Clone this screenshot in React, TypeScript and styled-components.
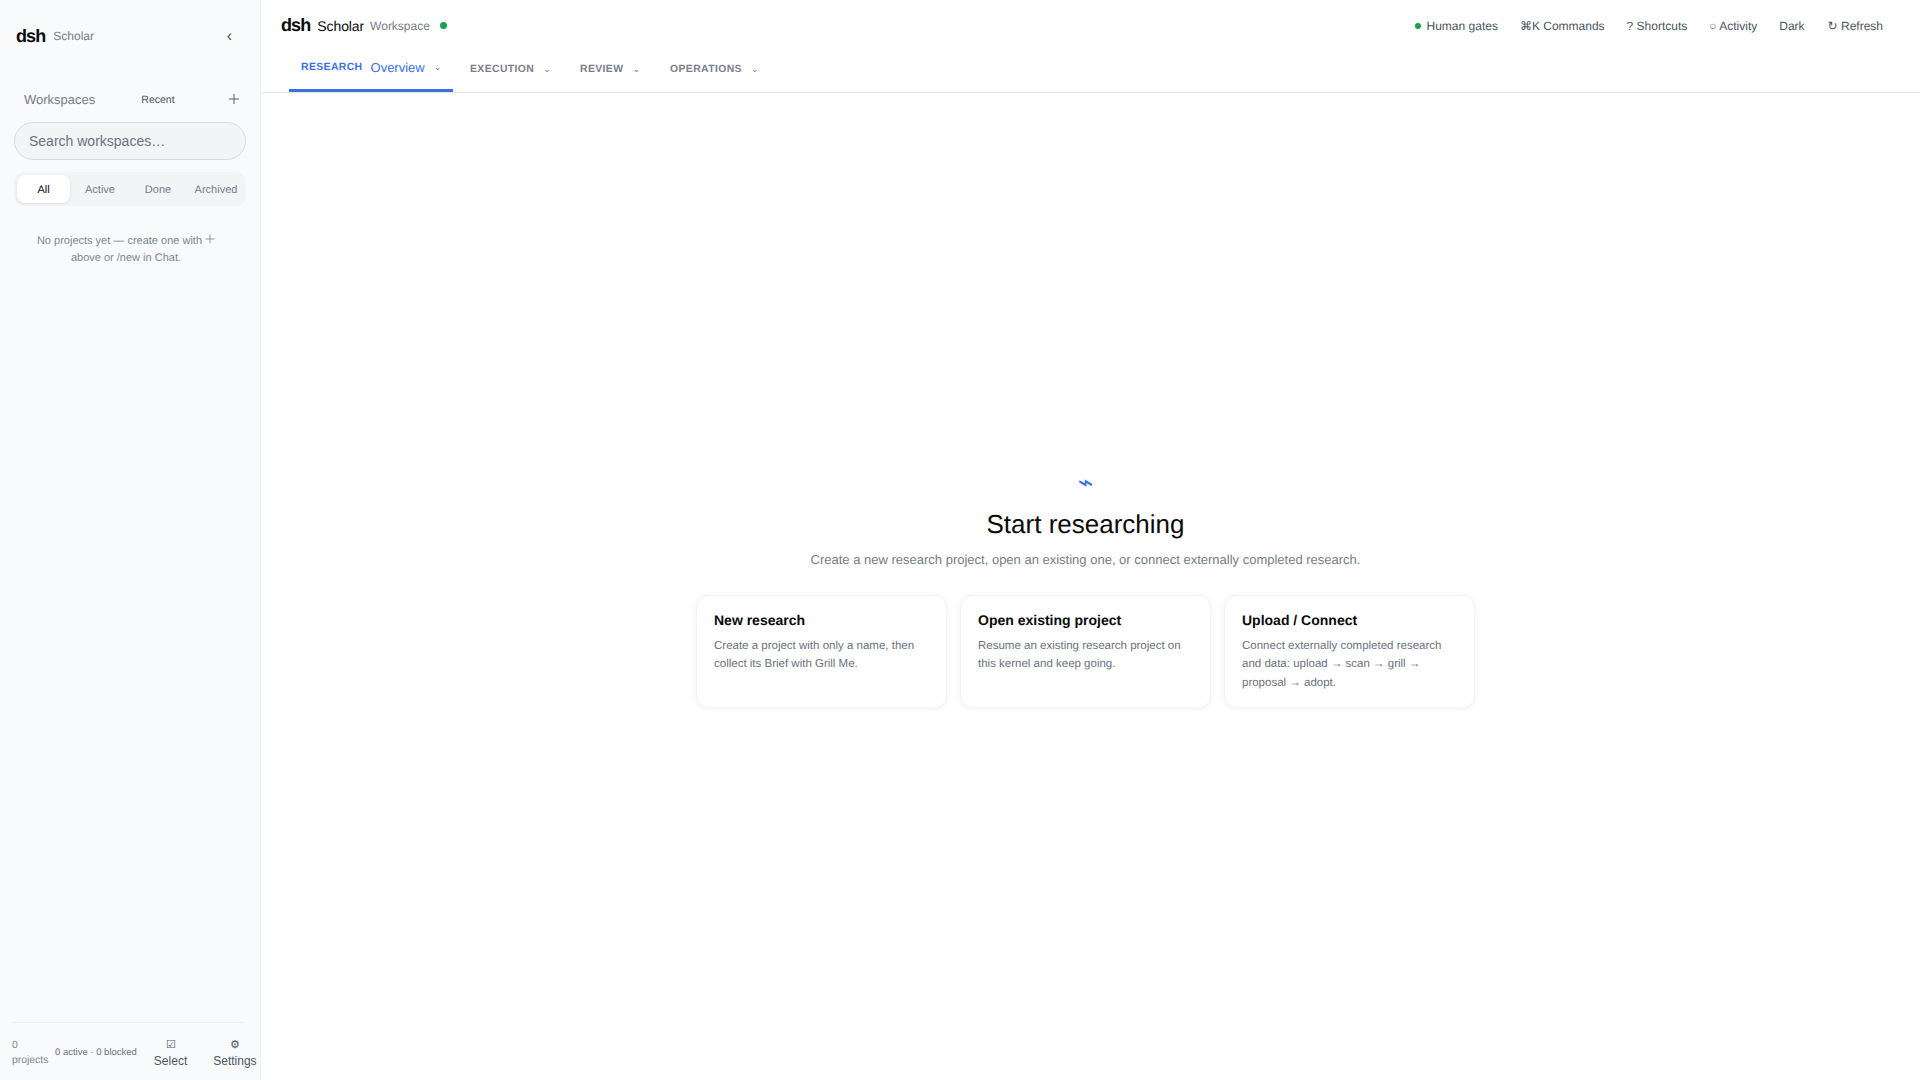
import React from 'react';
import styled, { createGlobalStyle } from 'styled-components';
import { Plus } from 'lucide-react';

const Global = createGlobalStyle`
  html, body {
    margin: 0;
    height: 100%;
  }
  body {
    font-family: "Liberation Sans", Arial, sans-serif;
    background: #ffffff;
    color: #0a0a0a;
    text-rendering: geometricPrecision;
  }
  button, input {
    font-family: inherit;
  }
`;

const Page = styled.div`
  display: flex;
  height: 100vh;
  overflow: hidden;
`;

const Sidebar = styled.aside`
  width: 261px;
  flex: 0 0 261px;
  box-sizing: border-box;
  border-right: 1px solid #eeeff1;
  background: #f9fafb;
  display: flex;
  flex-direction: column;
  padding: 0 14px;
`;

const Brand = styled.div`
  height: 72px;
  display: flex;
  align-items: center;
  padding: 0 2px;
  gap: 8px;
`;

const Logo = styled.span`
  font-size: 18px;
  font-weight: 700;
  letter-spacing: -0.9px;
  color: #0a0a0a;
`;

const BrandName = styled.span`
  font-size: 12px;
  color: #767c87;
`;

const Collapse = styled.button`
  margin-left: auto;
  margin-right: 12px;
  border: 0;
  background: none;
  padding: 0;
  font-size: 16px;
  color: #4b5563;
`;

const WorkspaceRow = styled.div`
  height: 28px;
  margin-top: 13px;
  display: flex;
  align-items: center;
  padding: 0 4px 0 10px;
`;

const WorkspaceLabel = styled.span`
  font-size: 13px;
  color: #767c87;
`;

const Recent = styled.span`
  padding-top: 2px;
  font-size: 10.5px;
  color: #4b5563;
  margin-left: 46px;
`;

const AddButton = styled.button`
  margin-left: auto;
  border: 0;
  background: none;
  padding: 0;
  display: flex;
  color: #4b5563;
`;

const Search = styled.input`
  box-sizing: border-box;
  width: 232px;
  height: 38px;
  margin-top: 9px;
  padding: 0 14px;
  border: 1px solid #d9dbdf;
  border-radius: 19px;
  background: #f3f4f6;
  font-size: 14px;
  outline: none;
  &::placeholder {
    color: #6b7280;
    opacity: 1;
  }
`;

const Segments = styled.div`
  box-sizing: border-box;
  width: 232px;
  height: 34px;
  margin-top: 12px;
  padding: 3px 2px 3px 3px;
  border-radius: 10px;
  background: #f3f4f6;
  display: grid;
  grid-template-columns: 53px 1fr 1fr 1fr;
  gap: 2px;
`;

const Segment = styled.div<{ $active?: boolean }>`
  display: flex;
  align-items: center;
  justify-content: center;
  padding-top: 1px;
  border-radius: 8px;
  font-size: 11px;
  color: ${(p) => (p.$active ? '#0a0a0a' : '#767c87')};
  background: ${(p) => (p.$active ? '#ffffff' : 'transparent')};
  box-shadow: ${(p) => (p.$active ? '0 1px 3px rgba(0, 0, 0, 0.1)' : 'none')};
`;

const EmptyNote = styled.p`
  margin: 26px 0 0;
  padding: 0 16px 0 8px;
  font-size: 11px;
  line-height: 17px;
  text-align: center;
  color: #7f8590;
`;

const PlusGlyph = styled(Plus)`
  margin: 0 -2px;
  vertical-align: -2px;
`;

const SideFooter = styled.div`
  margin: auto 2px 0 -2px;
  height: 58px;
  box-sizing: border-box;
  padding-top: 2px;
  border-top: 1px solid #eeeff1;
  display: flex;
  align-items: center;
`;

const Count = styled.span`
  width: 35px;
  font-size: 10.4px;
  line-height: 15px;
  color: #7f8590;
`;

const Stats = styled.span`
  margin-left: 8px;
  font-size: 9.5px;
  color: #6b7280;
  white-space: nowrap;
`;

const FooterButton = styled.button<{ $offset: number }>`
  margin-left: ${(p) => p.$offset}px;
  border: 0;
  background: none;
  padding: 0;
  display: flex;
  flex-direction: column;
  align-items: center;
  gap: 3px;
  font-size: 12px;
  color: #4b5563;
`;

const FooterIcon = styled.span`
  font-size: 11px;
  line-height: 14px;
`;

const Main = styled.main`
  flex: 1;
  min-width: 0;
  display: flex;
  flex-direction: column;
`;

const Header = styled.header`
  height: 93px;
  box-sizing: border-box;
  border-bottom: 1px solid #e5e7eb;
  display: flex;
  flex-direction: column;
`;

const TopRow = styled.div`
  height: 51px;
  display: flex;
  align-items: center;
  padding: 0 37px 0 20px;
`;

const TopBrand = styled.span`
  font-size: 14px;
  letter-spacing: -0.1px;
  color: #0a0a0a;
  margin-left: 7px;
`;

const TopWorkspace = styled.span`
  font-size: 12px;
  color: #767c87;
  margin-left: 6px;
`;

const Dot = styled.span<{ $size: number }>`
  display: inline-block;
  width: ${(p) => p.$size}px;
  height: ${(p) => p.$size}px;
  border-radius: 50%;
  background: #16a34a;
`;

const StatusDot = styled(Dot)`
  margin-left: 10px;
`;

const TopActions = styled.div`
  margin-left: auto;
  display: flex;
  align-items: center;
  gap: 22px;
  font-size: 12px;
  color: #4b5563;
`;

const Action = styled.span`
  display: inline-flex;
  align-items: center;
  gap: 2px;
  white-space: pre;
`;

const RefreshAction = styled(Action)`
  margin-left: 1px;
`;

const Tabs = styled.nav`
  flex: 1;
  display: flex;
  gap: 5px;
  padding-left: 28px;
`;

const Tab = styled.div<{ $active?: boolean; $width: number }>`
  box-sizing: border-box;
  width: ${(p) => p.$width}px;
  padding: ${(p) => (p.$active ? 0 : 4)}px 12px 6px;
  display: flex;
  align-items: center;
  border-bottom: 3px solid ${(p) => (p.$active ? '#3b6fe8' : 'transparent')};
`;

const TabLabel = styled.span<{ $active?: boolean }>`
  font-size: 10.4px;
  font-weight: 700;
  letter-spacing: 0.4px;
  color: ${(p) => (p.$active ? '#3b6fe8' : '#7a808b')};
`;

const TabCurrent = styled.span`
  margin-left: 8px;
  font-size: 13px;
  color: #3b6fe8;
`;

const TabCaret = styled.span`
  margin-left: 9px;
  font-size: 9px;
  color: #6b7280;
`;

const Content = styled.section`
  flex: 1;
  display: flex;
  flex-direction: column;
  align-items: center;
  justify-content: center;
  padding: 6px 10px 0 0;
`;

const Spark = styled.div`
  font-size: 26px;
  line-height: 20px;
  color: #3b6fe8;
`;

const Title = styled.h1`
  margin: 14px 0 0;
  font-size: 26px;
  font-weight: 400;
  line-height: 36px;
  color: #0a0a0a;
`;

const Subtitle = styled.p`
  margin: 8px 0 0;
  font-size: 13px;
  line-height: 20px;
  color: #767c87;
`;

const Cards = styled.div`
  margin-top: 25px;
  display: grid;
  grid-template-columns: repeat(3, 251px);
  gap: 13px;
`;

const Card = styled.div`
  box-sizing: border-box;
  height: 113px;
  padding: 14px 17px;
  border: 1px solid #f3f4f6;
  border-radius: 12px;
  background: #ffffff;
  box-shadow: 0 1px 6px rgba(0, 0, 0, 0.06);
`;

const CardTitle = styled.h3`
  margin: 0;
  font-size: 14px;
  font-weight: 700;
  line-height: 20px;
  color: #0a0a0a;
`;

const CardText = styled.p`
  margin: 7px 0 0;
  font-size: 11.5px;
  line-height: 18.5px;
  color: #6b7280;
`;

const tabs = [
  { label: 'EXECUTION', width: 105 },
  { label: 'REVIEW', width: 85 },
  { label: 'OPERATIONS', width: 130 },
];

const cards = [
  {
    title: 'New research',
    text: 'Create a project with only a name, then collect its Brief with Grill Me.',
  },
  {
    title: 'Open existing project',
    text: 'Resume an existing research project on this kernel and keep going.',
  },
  {
    title: 'Upload / Connect',
    text: 'Connect externally completed research and data: upload → scan → grill → proposal → adopt.',
  },
];

export default function App() {
  return (
    <Page>
      <Global />
      <Sidebar>
        <Brand>
          <Logo>dsh</Logo>
          <BrandName>Scholar</BrandName>
          <Collapse>‹</Collapse>
        </Brand>
        <WorkspaceRow>
          <WorkspaceLabel>Workspaces</WorkspaceLabel>
          <Recent>Recent</Recent>
          <AddButton>
            <Plus size={16} strokeWidth={1.4} />
          </AddButton>
        </WorkspaceRow>
        <Search placeholder="Search workspaces…" />
        <Segments>
          <Segment $active>All</Segment>
          <Segment>Active</Segment>
          <Segment>Done</Segment>
          <Segment>Archived</Segment>
        </Segments>
        <EmptyNote>
          No projects yet — create one with <PlusGlyph size={14} strokeWidth={1.4} /> above or /new
          in Chat.
        </EmptyNote>
        <SideFooter>
          <Count>0 projects</Count>
          <Stats>0 active · 0 blocked</Stats>
          <FooterButton $offset={17}>
            <FooterIcon>☑</FooterIcon>
            Select
          </FooterButton>
          <FooterButton $offset={26}>
            <FooterIcon>⚙</FooterIcon>
            Settings
          </FooterButton>
        </SideFooter>
      </Sidebar>
      <Main>
        <Header>
          <TopRow>
            <Logo>dsh</Logo>
            <TopBrand>Scholar</TopBrand>
            <TopWorkspace>Workspace</TopWorkspace>
            <StatusDot $size={7} />
            <TopActions>
              <Action>
                <Dot $size={6} /> Human gates
              </Action>
              <Action>⌘K Commands</Action>
              <Action>? Shortcuts</Action>
              <Action>○ Activity</Action>
              <Action>Dark</Action>
              <RefreshAction>↻ Refresh</RefreshAction>
            </TopActions>
          </TopRow>
          <Tabs>
            <Tab $active $width={164}>
              <TabLabel $active>RESEARCH</TabLabel>
              <TabCurrent>Overview</TabCurrent>
              <TabCaret>⌄</TabCaret>
            </Tab>
            {tabs.map((tab) => (
              <Tab key={tab.label} $width={tab.width}>
                <TabLabel>{tab.label}</TabLabel>
                <TabCaret>⌄</TabCaret>
              </Tab>
            ))}
          </Tabs>
        </Header>
        <Content>
          <Spark>⌁</Spark>
          <Title>Start researching</Title>
          <Subtitle>
            Create a new research project, open an existing one, or connect externally completed
            research.
          </Subtitle>
          <Cards>
            {cards.map((card) => (
              <Card key={card.title}>
                <CardTitle>{card.title}</CardTitle>
                <CardText>{card.text}</CardText>
              </Card>
            ))}
          </Cards>
        </Content>
      </Main>
    </Page>
  );
}
